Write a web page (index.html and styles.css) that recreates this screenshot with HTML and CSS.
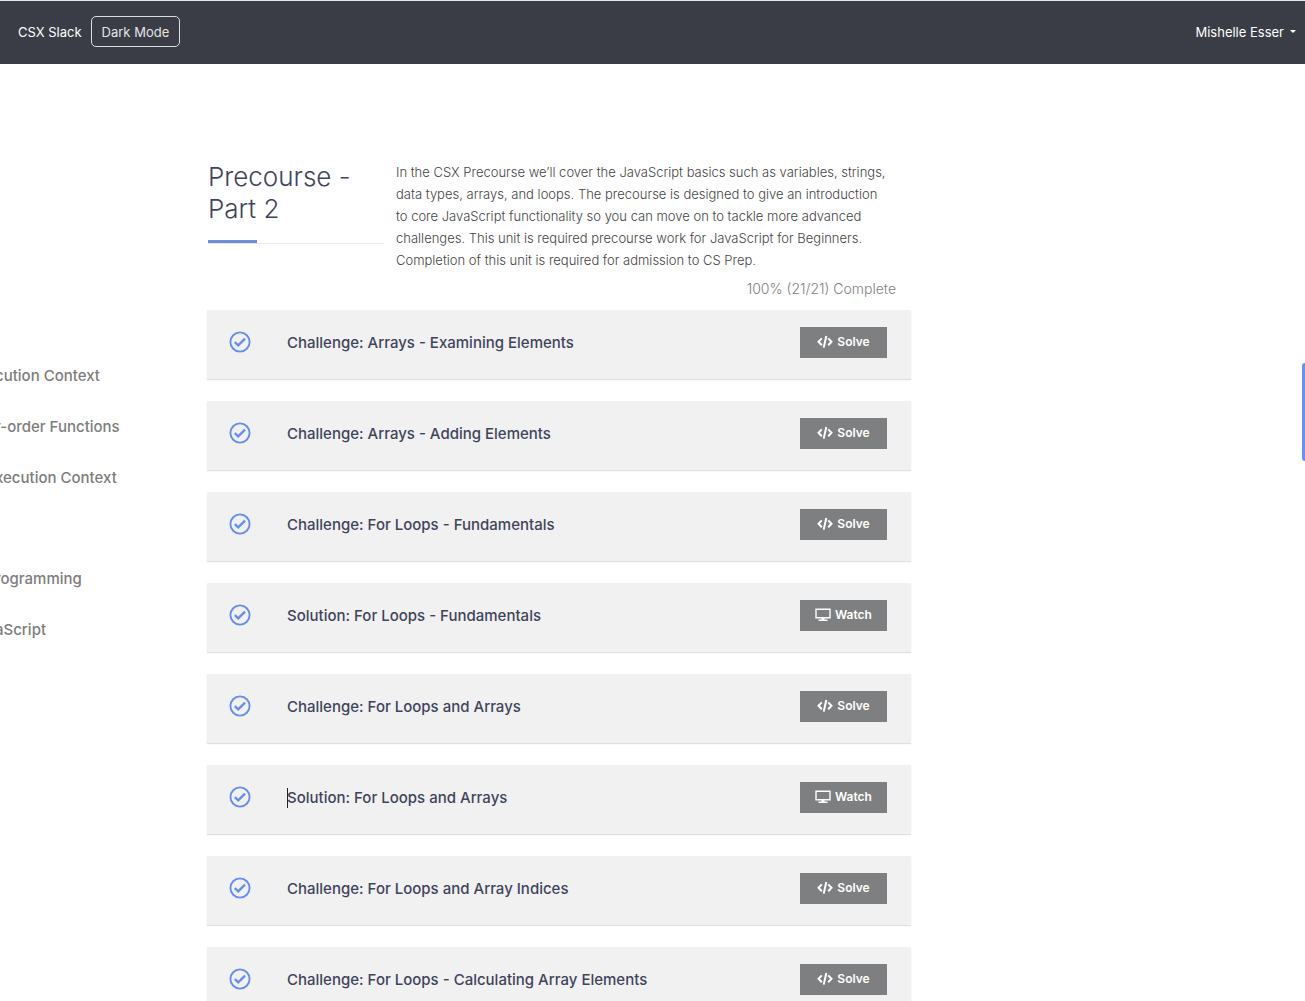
FILE: index.html
```html
<!DOCTYPE html>
<html lang="en">
<head>
<meta charset="utf-8">
<meta name="viewport" content="width=device-width, initial-scale=1">
<title>Precourse - Part 2</title>
<link rel="stylesheet" href="styles.css">
</head>
<body>
<svg class="sprite" aria-hidden="true">
  <symbol id="check" viewBox="0 0 22 22"><circle cx="11" cy="11" r="9.6" fill="none" stroke="currentColor" stroke-width="1.9"/><path d="M5.8 11.2l3.4 3.2 6.8-6.8" fill="none" stroke="currentColor" stroke-width="2.3"/></symbol>
  <symbol id="code" viewBox="0 0 16 14"><path d="M4.8 3.4L1.5 6.8l3.3 3.4M11.2 3.4l3.3 3.4-3.3 3.4M9.3 1L6.7 12.6" fill="none" stroke="currentColor" stroke-width="2"/></symbol>
  <symbol id="screen" viewBox="0 0 16 14"><path d="M1 1.2h14v8.6H1z" fill="none" stroke="currentColor" stroke-width="1.4"/><path d="M6.5 10h3v1.4h3V13h-9v-1.6h3z" fill="currentColor"/></symbol>
</svg>
<header class="topbar">
  <a class="topbar-link" href="#">CSX Slack</a>
  <button class="mode" type="button">Dark Mode</button>
  <button class="user" type="button">Mishelle Esser <span class="caret"></span></button>
</header>
<div class="page">
  <nav class="units" aria-label="Units">
    <a href="#">cution Context</a>
    <a href="#">r-order Functions</a>
    <a class="before-gap" href="#">xecution Context</a>
    <a href="#">rogramming</a>
    <a href="#">aScript</a>
  </nav>
  <main class="unit">
    <div class="intro">
      <h1 class="title">Precourse -<br>Part 2</h1>
      <p class="summary">In the CSX Precourse we’ll cover the JavaScript basics such as variables, strings,<br>data types, arrays, and loops. The precourse is designed to give an introduction<br>to core JavaScript functionality so you can move on to tackle more advanced<br>challenges. This unit is required precourse work for JavaScript for Beginners.<br>Completion of this unit is required for admission to CS Prep.</p>
    </div>
    <p class="progress">100% (21/21) Complete</p>
    <ul class="lessons">
      <li class="lesson"><svg class="check"><use href="#check"/></svg><h2 class="name">Challenge: Arrays - Examining Elements</h2><button class="action" type="button"><svg class="icon"><use href="#code"/></svg>Solve</button></li>
      <li class="lesson"><svg class="check"><use href="#check"/></svg><h2 class="name">Challenge: Arrays - Adding Elements</h2><button class="action" type="button"><svg class="icon"><use href="#code"/></svg>Solve</button></li>
      <li class="lesson"><svg class="check"><use href="#check"/></svg><h2 class="name">Challenge: For Loops - Fundamentals</h2><button class="action" type="button"><svg class="icon"><use href="#code"/></svg>Solve</button></li>
      <li class="lesson"><svg class="check"><use href="#check"/></svg><h2 class="name">Solution: For Loops - Fundamentals</h2><button class="action" type="button"><svg class="icon"><use href="#screen"/></svg>Watch</button></li>
      <li class="lesson"><svg class="check"><use href="#check"/></svg><h2 class="name">Challenge: For Loops and Arrays</h2><button class="action" type="button"><svg class="icon"><use href="#code"/></svg>Solve</button></li>
      <li class="lesson"><svg class="check"><use href="#check"/></svg><h2 class="name current">Solution: For Loops and Arrays</h2><button class="action" type="button"><svg class="icon"><use href="#screen"/></svg>Watch</button></li>
      <li class="lesson"><svg class="check"><use href="#check"/></svg><h2 class="name">Challenge: For Loops and Array Indices</h2><button class="action" type="button"><svg class="icon"><use href="#code"/></svg>Solve</button></li>
      <li class="lesson"><svg class="check"><use href="#check"/></svg><h2 class="name">Challenge: For Loops - Calculating Array Elements</h2><button class="action" type="button"><svg class="icon"><use href="#code"/></svg>Solve</button></li>
    </ul>
  </main>
</div>
<div class="edge-tab"></div>
</body>
</html>
```
FILE: styles.css
```css
* { box-sizing: border-box; }
body {
  margin: 0;
  background: #fff;
  color: #3f445b;
  font-family: Inter, "Liberation Sans", sans-serif;
  overflow: hidden;
}
h1, h2, p, ul { margin: 0; padding: 0; }
ul { list-style: none; }
button { font-family: inherit; }
.sprite { display: none; }

.topbar {
  display: flex;
  align-items: center;
  height: 64px;
  padding: 0 9px 2px 18px;
  border-top: 1px solid #dfeaea;
  background: #3a3d46;
}
.topbar-link { color: #fff; font-size: 13px; text-decoration: none; }
.mode {
  height: 31px;
  margin-left: 9px;
  padding: 0 10px;
  border: 1px solid #dcdee2;
  border-radius: 5px;
  background: none;
  color: #e4e5e8;
  font-size: 13px;
}
.user {
  display: flex;
  align-items: center;
  gap: 6px;
  margin-left: auto;
  padding: 0;
  border: 0;
  background: none;
  color: #fff;
  font-size: 13px;
}
.caret { border: 3px solid transparent; border-top-color: #fff; border-bottom: 0; }

.page { display: grid; grid-template-columns: 207fr 704fr 394fr; }
.units {
  display: flex;
  flex-direction: column;
  gap: 31px;
  margin-left: -5px;
  padding-top: 302px;
}
.units a {
  color: #7d7d7d;
  font-size: 15px;
  font-weight: 500;
  line-height: 20px;
  text-decoration: none;
}
.units .before-gap { margin-bottom: 50px; }

.unit { padding-top: 97px; }
.intro { display: grid; grid-template-columns: 176px 1fr; gap: 12px; align-items: start; padding-left: 1px; }
.title {
  padding-bottom: 18px;
  border-bottom: 1px solid #e8eaee;
  background: linear-gradient(#6d92dc, #6d8bd0) left bottom / 49px 3px no-repeat;
  font-size: 26px;
  font-weight: 300;
  line-height: 32px;
}
.summary {
  color: #444;
  font-size: 13px;
  font-weight: 300;
  line-height: 22px;
  white-space: nowrap;
}
.progress {
  padding: 7px 15px 10px 0;
  color: #808080;
  font-size: 14px;
  font-weight: 300;
  line-height: 22px;
  text-align: right;
}
.lessons { display: grid; gap: 22px; }
.lesson {
  display: flex;
  align-items: center;
  height: 69px;
  padding: 0 24px 4px 22px;
  background: #f1f1f1;
  box-shadow: 0 1px 1px rgba(0, 0, 0, 0.12);
}
.check { width: 22px; height: 22px; margin: 0 36px 2px 0; color: #668cf0; }
.name { font-size: 15px; font-weight: 500; line-height: 20px; }
.current { position: relative; }
.current::before {
  content: "";
  position: absolute;
  inset: 0 auto 0 0;
  width: 1px;
  background: #222;
}
.action {
  display: flex;
  align-items: center;
  justify-content: center;
  gap: 4px;
  width: 87px;
  height: 31px;
  margin-left: auto;
  padding: 0 0 2px;
  border: 0;
  background: #7e7f80;
  color: #fff;
  font-size: 12px;
  font-weight: 600;
}
.icon { width: 16px; height: 14px; }

.edge-tab {
  position: absolute;
  top: 363px;
  right: 0;
  width: 3px;
  height: 98px;
  border-radius: 3px 0 0 3px;
  background: #6b8ff5;
}
```
